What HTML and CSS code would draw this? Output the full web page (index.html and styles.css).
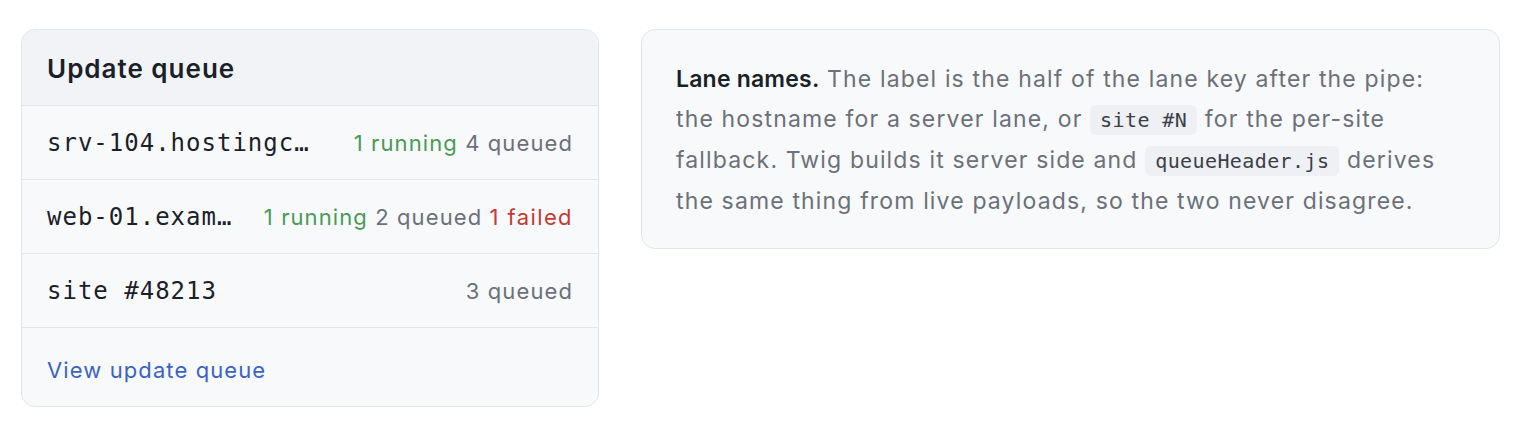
FILE: index.html
```html
<!DOCTYPE html>
<html lang="en">
<head>
<meta charset="utf-8">
<title>Update queue</title>
<link rel="stylesheet" href="styles.css">
</head>
<body>
<div class="page">
  <section class="card queue">
    <header class="queue-head">Update queue</header>
    <div class="lane">
      <span class="lane-name">srv-104.hostingcloud.example.net</span>
      <span class="lane-stats"><span class="ok">1 running</span> 4 queued</span>
    </div>
    <div class="lane">
      <span class="lane-name">web-01.example.org</span>
      <span class="lane-stats"><span class="ok">1 running</span> 2 queued <span class="bad">1 failed</span></span>
    </div>
    <div class="lane">
      <span class="lane-name">site #48213</span>
      <span class="lane-stats">3 queued</span>
    </div>
    <footer class="queue-foot"><a class="link" href="#">View update queue</a></footer>
  </section>
  <section class="card note">
    <p><strong>Lane names.</strong> The label is the half of the lane key after the pipe: the hostname for a server lane, or <code>site #N</code> for the per-site fallback. Twig builds it server side and <code>queueHeader.js</code> derives the same thing from live payloads, so the two never disagree.</p>
  </section>
</div>
</body>
</html>
```
FILE: styles.css
```css
* { box-sizing: border-box; }
html, body { margin: 0; padding: 0; background: #ffffff; }
body {
  font-family: Inter, "Noto Sans", "Liberation Sans", sans-serif;
  font-size: 22px;
  letter-spacing: 1.1px;
  color: #6b7079;
}
.page {
  display: flex;
  align-items: flex-start;
  gap: 42px;
  padding: 29px 28px 0 21px;
}
.card {
  background: #f8f9fb;
  border: 1px solid #e2e5e9;
  border-radius: 14px;
  overflow: hidden;
}
.queue { width: 578px; flex: none; }
.queue-head {
  background: #f1f3f6;
  height: 76px;
  padding: 1px 25px 0;
  display: flex;
  align-items: center;
  font-size: 26px;
  font-weight: 600;
  letter-spacing: 1px;
  color: #1a1f29;
  border-bottom: 1px solid #e2e5e9;
}
.lane {
  height: 74px;
  padding: 1px 25px 0;
  display: flex;
  align-items: center;
  gap: 30px;
  border-bottom: 1px solid #e2e5e9;
}
.lane-name {
  flex: 1;
  min-width: 0;
  white-space: nowrap;
  overflow: hidden;
  text-overflow: ellipsis;
  font-family: "DejaVu Sans Mono", "Liberation Mono", monospace;
  font-size: 24px;
  letter-spacing: 1px;
  color: #1a1f29;
}
.lane-stats { flex: none; white-space: nowrap; color: #6b7079; }
.ok { color: #4a9a55; }
.bad { color: #c23b35; letter-spacing: 1.4px; }
.queue-foot {
  height: 78px;
  padding: 5px 25px 0;
  display: flex;
  align-items: center;
}
.link { color: #3b63c4; text-decoration: none; }
.note { flex: 1; padding: 29px 34px 27px; }
.note p { margin: 0; line-height: 40px; font-size: 23px; letter-spacing: 1.15px; }
.note strong { color: #1a1f29; font-weight: 600; letter-spacing: 0.2px; }
code {
  font-family: "DejaVu Sans Mono", "Liberation Mono", monospace;
  font-size: 20px;
  letter-spacing: 0.4px;
  background: #eef0f3;
  color: #3a3f48;
  padding: 3px 10px;
  border-radius: 6px;
}
```
